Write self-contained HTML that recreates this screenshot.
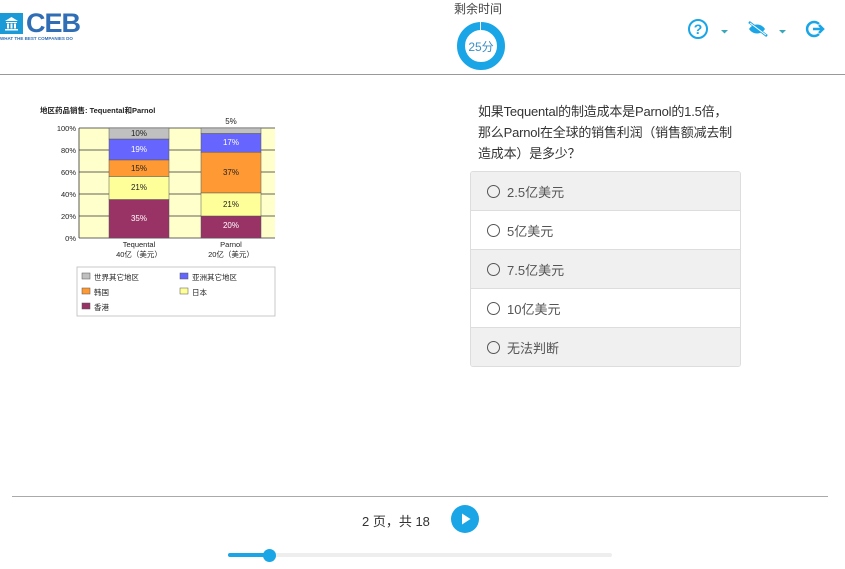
<!DOCTYPE html>
<html><head><meta charset="utf-8"><style>
*{margin:0;padding:0;box-sizing:border-box}
body{width:845px;height:569px;background:#fff;position:relative;overflow:hidden;font-family:"Liberation Sans","Noto Sans CJK SC",sans-serif;color:#333}
.abs{position:absolute}
.q{left:478px;top:101px;font-size:13px;line-height:21px;color:#333;white-space:nowrap;letter-spacing:-0.2px}
.opts{left:470px;top:171px;width:271px;border:1px solid #ddd;border-radius:3px;overflow:hidden}
.opt{height:39px;border-top:1px solid #ddd;font-size:13px;color:#555;padding-left:16px;display:flex;align-items:center}
.opt:first-child{border-top:none;height:38px}
.opt.g{background:#f0f0f0}
.rad{width:13px;height:13px;border:1px solid #555;border-radius:50%;margin-right:7px}
</style></head><body>
<div class="abs" style="left:0;top:13px;width:23px;height:21px;background:#1a9ad6"></div>
<svg class="abs" style="left:3px;top:15px" width="17" height="17" viewBox="0 0 17 17"><path d="M8.5 2 L15 6 H2 Z M3 7h11v1H3z M4 8.5h2v5H4z M7.5 8.5h2v5h-2z M11 8.5h2v5h-2z M2 14h13v1.5H2z" fill="#fff"/></svg>
<div class="abs" style="left:26px;top:8px;font-size:27px;font-weight:bold;color:#2f6db5;letter-spacing:-1px;line-height:30px">CEB</div>
<div class="abs" style="left:0;top:36px;font-size:4.5px;color:#2f6db5;font-weight:bold;white-space:nowrap">WHAT THE BEST COMPANIES DO</div>
<div class="abs" style="left:454px;top:0;font-size:12px;color:#444">剩余时间</div>
<div class="abs" style="left:457px;top:22px;width:48px;height:48px;border-radius:50%;border:8px solid #1aa5e6"></div>
<div class="abs" style="left:480px;top:22px;width:1px;height:8px;background:#fff"></div>
<div class="abs" style="left:457px;top:38px;width:48px;text-align:center;font-size:12px;color:#3a8fc4">25分</div>
<svg class="abs" style="left:687px;top:18px" width="145" height="24" viewBox="0 0 145 24">
<circle cx="11" cy="11" r="9" fill="none" stroke="#1aa5e6" stroke-width="2"/>
<text x="11" y="16" text-anchor="middle" font-size="14" font-weight="bold" fill="#1aa5e6" font-family="Liberation Sans">?</text>
<path d="M34 12h7l-3.5 3.5z" fill="#3aa7b9"/>
<path d="M62 11 C66 5 74 5 78 11 C74 17 66 17 62 11 Z" fill="#1aa5e6"/>
<path d="M62 4 L80 18" stroke="#1aa5e6" stroke-width="2.5"/>
<path d="M63 5 L79 17" stroke="#fff" stroke-width="1"/>
<path d="M92 12h7l-3.5 3.5z" fill="#3aa7b9"/>
<path d="M132 6 A7 7 0 1 0 132 16" fill="none" stroke="#1aa5e6" stroke-width="2.5"/>
<path d="M126 11h9M132 7l4 4-4 4" fill="none" stroke="#1aa5e6" stroke-width="2.5"/>
</svg>
<div class="abs" style="left:0;top:74px;width:845px;height:1px;background:#999"></div>
<svg class="abs" style="left:30px;top:95px" width="250" height="230" viewBox="30 95 250 230" font-family="Liberation Sans,Noto Sans CJK SC,sans-serif">
<text x="40" y="113" font-size="7.5" font-weight="bold" fill="#222">地区药品销售:  Tequental和Parnol</text>
<rect x="79" y="128" width="196" height="110" fill="#ffffcc"/>
<g stroke="#333" stroke-width="0.8">
<line x1="79" y1="128" x2="275" y2="128"/><line x1="79" y1="150" x2="275" y2="150"/><line x1="79" y1="172" x2="275" y2="172"/><line x1="79" y1="194" x2="275" y2="194"/><line x1="79" y1="216" x2="275" y2="216"/><line x1="79" y1="238" x2="275" y2="238"/><line x1="79" y1="128" x2="79" y2="238"/>
</g>
<g stroke="#555" stroke-width="0.5">
<rect x="109" y="199.5" width="60" height="38.5" fill="#993366"/>
<rect x="109" y="176.4" width="60" height="23.1" fill="#ffff99"/>
<rect x="109" y="159.9" width="60" height="16.5" fill="#ff9933"/>
<rect x="109" y="139" width="60" height="20.9" fill="#6666ff"/>
<rect x="109" y="128" width="60" height="11" fill="#c0c0c0"/>
<rect x="201" y="216" width="60" height="22" fill="#993366"/>
<rect x="201" y="192.9" width="60" height="23.1" fill="#ffff99"/>
<rect x="201" y="152.2" width="60" height="40.7" fill="#ff9933"/>
<rect x="201" y="133.5" width="60" height="18.7" fill="#6666ff"/>
<rect x="201" y="128" width="60" height="5.5" fill="#c0c0c0"/>
</g>
<g font-size="8" text-anchor="middle">
<text x="139" y="136" fill="#222">10%</text><text x="139" y="152" fill="#fff">19%</text><text x="139" y="171" fill="#222">15%</text><text x="139" y="190" fill="#222">21%</text><text x="139" y="221" fill="#fff">35%</text>
<text x="231" y="124" fill="#222">5%</text><text x="231" y="145" fill="#fff">17%</text><text x="231" y="175" fill="#222">37%</text><text x="231" y="207" fill="#222">21%</text><text x="231" y="228" fill="#fff">20%</text>
</g>
<g font-size="7.5" text-anchor="end" fill="#222">
<text x="76" y="131">100%</text><text x="76" y="153">80%</text><text x="76" y="175">60%</text><text x="76" y="197">40%</text><text x="76" y="219">20%</text><text x="76" y="241">0%</text>
</g>
<g font-size="7.5" text-anchor="middle" fill="#222">
<text x="139" y="247">Tequental</text><text x="139" y="257">40亿（美元）</text>
<text x="231" y="247">Parnol</text><text x="231" y="257">20亿（美元）</text>
</g>
<rect x="77" y="267" width="198" height="49" fill="#fff" stroke="#bbb" stroke-width="0.8"/>
<g font-size="7.5" fill="#222" stroke="#555" stroke-width="0.5">
<rect x="82" y="273" width="8" height="6" fill="#c0c0c0"/><text x="94" y="280" stroke="none">世界其它地区</text>
<rect x="180" y="273" width="8" height="6" fill="#6666ff"/><text x="192" y="280" stroke="none">亚洲其它地区</text>
<rect x="82" y="288" width="8" height="6" fill="#ff9933"/><text x="94" y="295" stroke="none">韩国</text>
<rect x="180" y="288" width="8" height="6" fill="#ffff99"/><text x="192" y="295" stroke="none">日本</text>
<rect x="82" y="303" width="8" height="6" fill="#993366"/><text x="94" y="310" stroke="none">香港</text>
</g>
</svg>
<div class="abs q">如果Tequental的制造成本是Parnol的1.5倍，<br>那么Parnol在全球的销售利润（销售额减去制<br>造成本）是多少？</div>
<div class="abs opts">
<div class="opt g"><span class="rad"></span>2.5亿美元</div>
<div class="opt"><span class="rad"></span>5亿美元</div>
<div class="opt g"><span class="rad"></span>7.5亿美元</div>
<div class="opt"><span class="rad"></span>10亿美元</div>
<div class="opt g"><span class="rad"></span>无法判断</div>
</div>
<div class="abs" style="left:12px;top:496px;width:816px;height:1px;background:#aaa"></div>
<div class="abs" style="left:362px;top:511px;font-size:13px;color:#333">2 页，共 18</div>
<div class="abs" style="left:451px;top:505px;width:28px;height:28px;border-radius:50%;background:#1aa5e6"></div>
<svg class="abs" style="left:451px;top:505px" width="28" height="28"><path d="M11 8.5 L19.5 14 L11 19.5 Z" fill="#fff"/></svg>
<div class="abs" style="left:228px;top:553px;width:384px;height:4px;background:#eee;border-radius:2px"></div>
<div class="abs" style="left:228px;top:553px;width:42px;height:4px;background:#1aa5e6;border-radius:2px"></div>
<div class="abs" style="left:263px;top:549px;width:13px;height:13px;border-radius:50%;background:#1aa5e6"></div>
</body></html>
